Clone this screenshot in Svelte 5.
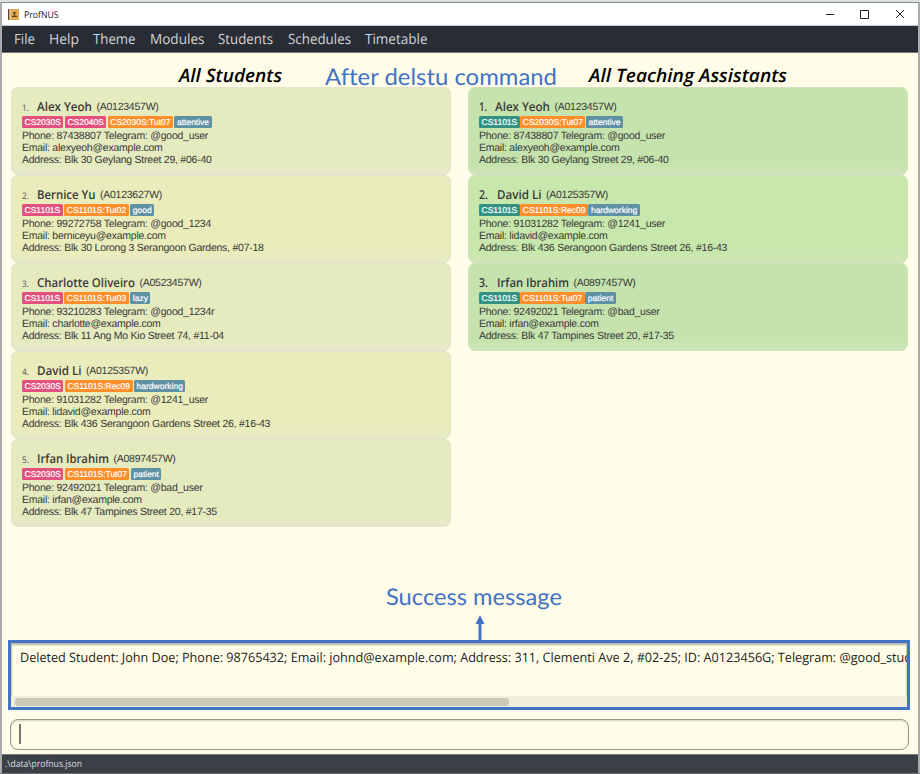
<script>
  const menus = [['File', 21, 14], ['Help', 30, 14], ['Theme', 42.5, 14], ['Modules', 54.5, 14], ['Students', 55, 14.5], ['Schedules', 63, 14], ['Timetable', 62.5, 0]];

  const alex = { name: 'Alex Yeoh', w: 55, id: 'A0123457W', phone: '87438807', tg: 'good_user', email: 'alexyeoh', address: 'Blk 30 Geylang Street 29, #06-40', trait: 'attentive' };
  const bernice = { name: 'Bernice Yu', w: 58.5, id: 'A0123627W', phone: '99272758', tg: 'good_1234', email: 'berniceyu', address: 'Blk 30 Lorong 3 Serangoon Gardens, #07-18', trait: 'good' };
  const charlotte = { name: 'Charlotte Oliveiro', w: 98, id: 'A0523457W', phone: '93210283', tg: 'good_1234r', email: 'charlotte', address: 'Blk 11 Ang Mo Kio Street 74, #11-04', trait: 'lazy' };
  const david = { name: 'David Li', w: 44.5, id: 'A0125357W', phone: '91031282', tg: '1241_user', email: 'lidavid', address: 'Blk 436 Serangoon Gardens Street 26, #16-43', trait: 'hardworking' };
  const irfan = { name: 'Irfan Ibrahim', w: 72, id: 'A0897457W', phone: '92492021', tg: 'bad_user', email: 'irfan', address: 'Blk 47 Tampines Street 20, #17-35', trait: 'patient' };

  const students = [
    { ...alex, modules: ['CS2030S', 'CS2040S'], group: 'CS2030S:Tut07' },
    { ...bernice, modules: ['CS1101S'], group: 'CS1101S:Tut02' },
    { ...charlotte, modules: ['CS1101S'], group: 'CS1101S:Tut03' },
    { ...david, modules: ['CS2030S'], group: 'CS1101S:Rec09' },
    { ...irfan, modules: ['CS2030S'], group: 'CS1101S:Tut07' }
  ];
  const assistants = [
    { ...alex, modules: ['CS1101S'], group: 'CS2030S:Tut07' },
    { ...david, modules: ['CS1101S'], group: 'CS1101S:Rec09' },
    { ...irfan, modules: ['CS1101S'], group: 'CS1101S:Tut07' }
  ];
  const message = 'Deleted Student: John Doe; Phone: 98765432; Email: johnd@example.com; Address: 311, Clementi Ave 2, #02-25; ID: A0123456G; Telegram: @good_stud';
</script>

{#snippet label(text, width, height, baseline, kind)}
  <svg class="label {kind}" {width} {height}><text x="0" y={baseline} textLength={width} lengthAdjust="spacingAndGlyphs">{text}</text></svg>
{/snippet}

{#snippet people(list, role)}
  <div class="list {role}">
    {#each list as p, i}
      <article>
        <div class="head">
          <span class="idx" class:first={i === 0}>
            {#if role === 'student'}
              {@render label(`${i + 1}.`, 7, 15, 12, 'small')}
            {:else}
              {@render label(`${i + 1}.`, i ? 9 : 8, 15, 12, 'name')}
            {/if}
          </span>
          {@render label(p.name, p.w, 15, 12, 'name')}
          <span class="id">({p.id})</span>
        </div>
        <div class="tags">
          {#each p.modules as m}<span class="module">{m}</span>{/each}
          <span class="group">{p.group}</span>
          <span class="trait">{p.trait}</span>
        </div>
        <p>Phone: {p.phone} Telegram: @{p.tg}</p>
        <p>Email: {p.email}@example.com</p>
        <p>Address: {p.address}</p>
      </article>
    {/each}
  </div>
{/snippet}

<div class="window">
  <header>
    <svg class="logo" width="11" height="11" viewBox="0 0 11 11">
      <rect width="11" height="11" rx="1" fill="#dca851" />
      <rect width="1.5" height="11" fill="#5b4a43" />
      <rect x="1.5" width="1" height="11" fill="#f1d49a" />
      <circle cx="6.5" cy="4" r="1.2" fill="#5a4027" />
      <path d="M6 5h1v1.5l2 .6v1H4v-1l2-.6z" fill="#5a4027" />
    </svg>
    {@render label('ProfNUS', 34.5, 14, 11, 'app')}
    <span class="grow"></span>
    <svg width="78" height="10" viewBox="0 0 78 10" fill="none" stroke="#222" stroke-width="1">
      <path d="M0 5.5H8M34.5 1.5H42.5V9.5H34.5ZM70 1L78 9M78 1L70 9" />
    </svg>
  </header>
  <nav>
    {#each menus as [text, w, gap]}
      <span style="margin-right:{gap}px">{@render label(text, w, 20, 15, 'menu')}</span>
    {/each}
  </nav>
  <main>
    <div class="titles">
      {@render label('All Students', 103, 24, 18, 'title')}
      {@render label('After delstu command', 232, 24, 21, 'note')}
      {@render label('All Teaching Assistants', 198, 24, 18, 'title')}
    </div>
    <div class="columns">
      {@render people(students, 'student')}
      {@render people(assistants, 'assistant')}
    </div>
    <div class="callout">
      {@render label('Success message', 176, 28, 22, 'note')}
      <svg class="arrow" width="10" height="26" viewBox="0 0 10 26" fill="#4472c4"><path d="M5 0L9.5 9H6.5V26H3.5V9H.5Z" /></svg>
    </div>
    <section class="result">
      <div class="message">{@render label(message, 892, 20, 15, 'msg')}</div>
      <div class="track"><div class="thumb"></div></div>
    </section>
    <div class="command"><i></i></div>
  </main>
  <footer>{@render label('.\\data\\profnus.json', 77, 18, 12, 'path')}</footer>
</div>

<style>
  :global(body) { margin: 0; background: #aaabaf; }
  .window { box-sizing: border-box; width: 920px; height: 774px; padding: 0 2px; border-top: 2px solid #dededd; border-bottom: 1px solid #6e7276; background: #aaabad; display: flex; flex-direction: column; overflow: hidden; font-family: "Liberation Sans", Arial, sans-serif; text-rendering: geometricPrecision; }
  .window > *, main > * { flex: none; }
  .label { display: block; flex: none; overflow: visible; font-family: "Open Sans", "Noto Sans", sans-serif; font-variant-ligatures: none; }
  .app { font-size: 9.3px; fill: #111; }
  .menu { font-size: 14.2px; fill: #d4d5d6; }
  .title { font-size: 18.5px; font-weight: 600; font-style: italic; fill: #000; }
  .note { font-family: Lato, sans-serif; font-size: 23px; fill: #4472c4; }
  .small { font-size: 9px; fill: #555; }
  .name { font-size: 12.3px; font-weight: 600; fill: #3a3a38; }
  .msg { font-size: 13px; fill: #222; }
  .path { font-size: 9.5px; fill: #dedfe0; }
  header { box-sizing: border-box; height: 24px; border-top: 1px solid #78908f; border-bottom: 1px solid #c9cbd0; background: #fff; display: flex; align-items: center; padding: 0 14px 0 6px; }
  .logo { margin-right: 5px; }
  .grow { flex: 1; }
  nav { box-sizing: border-box; height: 27px; background: #282c34; border-bottom: 1px solid #77777a; display: flex; align-items: flex-start; padding: 3px 0 0 12px; }
  main { width: 916px; height: 701px; box-sizing: border-box; background: #fffde8; display: flex; flex-direction: column; }
  .titles { display: flex; height: 24px; padding: 11px 0 0 177px; }
  .titles .note { margin: 0 32px 0 43px; }
  .columns { display: flex; gap: 17px; height: 440px; padding-left: 9px; margin-top: -1px; align-items: flex-start; }
  .list { width: 440px; }
  article { height: 88px; box-sizing: border-box; padding: 12px 11px 0; border-radius: 8px; background: linear-gradient(#e5eabf 80px, #e6ebc6 80px); box-shadow: inset 0 0 0 1px #e4e5ca, inset 0 -1px 0 1px #e4e6cc; }
  article:nth-child(even) { background: linear-gradient(#eaedbb 80px, #e6ebc4 80px); }
  .assistant article { background: linear-gradient(#c6e3ae 80px, #cbe5b5 80px); box-shadow: inset 0 0 0 1px #cfe2bd, inset 0 -1px 0 1px #cee4bc; }
  .assistant article:nth-child(even) { background: linear-gradient(#c8e7ac 80px, #cce6b4 80px); }
  .head { display: flex; height: 17px; }
  .idx { width: 15px; }
  .assistant .idx { width: 18px; }
  .assistant .idx.first { width: 16px; }
  .id { margin-left: 4.5px; font-size: 10.5px; letter-spacing: -0.25px; line-height: 17px; color: #383838; }
  .tags { display: flex; gap: 1.5px; height: 12.3px; margin-bottom: 1.7px; }
  .assistant .tags { gap: 0.5px; }
  .tags span { height: 12px; padding: 0 2.5px; border-radius: 1.5px; color: #fff; font-size: 8.5px; line-height: 12.8px; -webkit-text-stroke: 0.2px #fff; }
  .module { background: #e4517f; }
  .assistant .module { background: #329383; }
  .group { background: #ff8e2b; }
  .trait { background: #5f91a5; }
  p { margin: 0; height: 12.2px; font-size: 10.5px; letter-spacing: -0.245px; line-height: 12.6px; color: #383838; white-space: nowrap; }
  .callout { display: flex; flex-direction: column; align-items: center; margin-top: 56px; height: 57px; width: 176px; margin-left: 384px; }
  .callout .arrow { margin: 4px 0 0 11px; flex: none; }
  .result { box-sizing: border-box; width: 902px; height: 70px; margin: 0 0 0 6px; border: 3px solid #4472c4; display: flex; flex-direction: column; box-shadow: inset 1px 2px 2px #b9b8a8, inset -1px 0 1px #d4d2bf; }
  .message { height: 53px; box-sizing: border-box; padding: 4px 0 0 9px; overflow: hidden; }
  .track { height: 11px; box-sizing: border-box; background: #f1efdb; padding: 2px 4px 1px; }
  .thumb { width: 494px; height: 8px; border-radius: 3px; background: #cbc9b6; }
  .command { box-sizing: border-box; width: 899px; height: 31px; margin: 9px 0 0 8px; padding: 4px 8px; border: 1.3px solid #97978c; border-radius: 8px; box-shadow: inset 0 1px 2px #d6d4c2; }
  .command i { display: block; width: 1.5px; height: 20px; background: #77776d; }
  footer { height: 19px; background: #3b3f46; border-top: 1px solid #777a7a; padding-left: 3px; box-sizing: border-box; }
</style>
